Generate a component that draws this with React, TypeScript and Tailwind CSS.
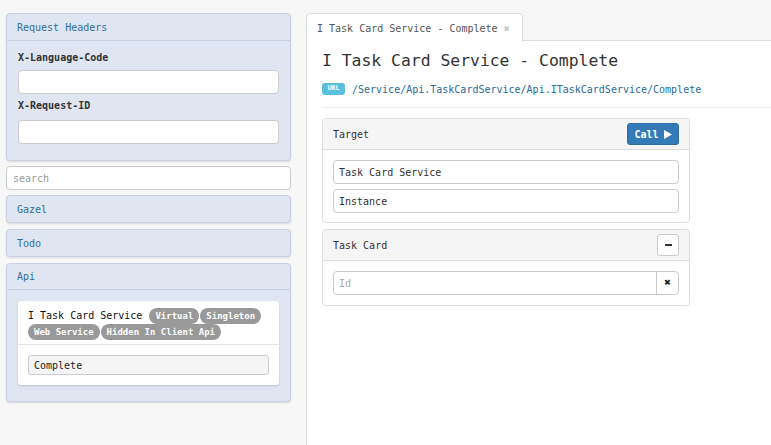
import React from "react";

const mono = { fontFamily: '"DejaVu Sans Mono", "Liberation Mono", monospace' };

function SidePanel({ title, children, headerH }: { title: string; children?: React.ReactNode; headerH: string }) {
  return (
    <div className="rounded-[4px] border border-[#c8d2e4] bg-[#dfe6f1] shadow-[0_1px_2px_rgba(0,0,0,0.12)]">
      <div className={`${headerH} flex items-center px-[10px] text-[10px] text-[#2f6f9a] ${children ? "border-b border-[#c8d2e4]" : ""}`}>
        {title}
      </div>
      {children}
    </div>
  );
}

function Badge({ children }: { children: React.ReactNode }) {
  return (
    <span className="inline-flex h-[16px] items-center rounded-[8px] bg-[#999] px-[6px] text-[9px] font-bold text-white leading-none">
      {children}
    </span>
  );
}

export default function App() {
  return (
    <div className="flex h-[445px] w-[771px] overflow-hidden bg-[#f7f7f7] text-[#333]" style={mono}>
      {/* Sidebar */}
      <div className="w-[306px] shrink-0 pl-[6px] pr-[15px] pt-[13px] flex flex-col">
        <SidePanel title="Request Headers" headerH="h-[27px]">
          <div className="px-[11px] pt-[9px] pb-[16px]">
            <div className="text-[10px] font-bold text-[#333] h-[16px] leading-[16px]">X-Language-Code</div>
            <div className="mt-[4px] h-[24px] rounded-[4px] border border-[#ccc] bg-white" />
            <div className="mt-[4px] text-[10px] font-bold text-[#333] h-[16px] leading-[16px]">X-Request-ID</div>
            <div className="mt-[6px] h-[24px] rounded-[4px] border border-[#ccc] bg-white" />
          </div>
        </SidePanel>
        <div className="mt-[5px] h-[24px] rounded-[4px] border border-[#ccc] bg-white flex items-center px-[6px] text-[10px] text-[#999]">
          search
        </div>
        <div className="mt-[5px]">
          <SidePanel title="Gazel" headerH="h-[26px]" />
        </div>
        <div className="mt-[6px]">
          <SidePanel title="Todo" headerH="h-[26px]" />
        </div>
        <div className="mt-[6px]">
          <SidePanel title="Api" headerH="h-[26px]">
            <div className="px-[11px] pt-[11px] pb-[16px]">
              <div className="rounded-[3px] bg-white shadow-[0_1px_2px_rgba(0,0,0,0.15)]">
                <div className="px-[10px] pt-[7px] pb-[4px] border-b border-[#e3e3e3] flex flex-wrap items-center gap-x-[1px] gap-y-[0px]">
                  <span className="text-[10px] text-[#111] mr-[6px] leading-[16px]">I Task Card Service</span>
                  <Badge>Virtual</Badge>
                  <Badge>Singleton</Badge>
                  <Badge>Web Service</Badge>
                  <Badge>Hidden In Client Api</Badge>
                </div>
                <div className="px-[10px] pt-[10px] pb-[10px]">
                  <div className="h-[20px] rounded-[3px] border border-[#ccc] bg-[#f5f5f5] flex items-center px-[5px] text-[10px] text-[#222]">
                    Complete
                  </div>
                </div>
              </div>
            </div>
          </SidePanel>
        </div>
      </div>

      {/* Main */}
      <div className="flex-1 flex flex-col pt-[13px]">
        <div className="flex h-[28px]">
          <div className="w-[217px] h-[29px] rounded-t-[4px] border border-b-0 border-[#ddd] bg-white flex items-center pl-[10px] text-[10px] text-[#555] relative z-10">
            <span>I Task Card Service - Complete</span>
            <span className="ml-[6px] text-[10px] text-[#c8c8c8]">✖</span>
          </div>
          <div className="flex-1 border-b border-[#ddd]" />
        </div>
        <div className="flex-1 bg-white border-l border-[#ddd] pl-[15px]">
          <div className="pt-[8px] text-[16.4px] text-[#333] leading-[24px]">I Task Card Service - Complete</div>
          <div className="mt-[9px] flex items-center h-[14px]">
            <span className="h-[12px] w-[23px] rounded-[3px] bg-[#5bc0de] text-white text-[6.5px] font-bold flex items-center justify-center">URL</span>
            <span className="ml-[7px] text-[10px] text-[#2a6a96]">/Service/Api.TaskCardService/Api.ITaskCardService/Complete</span>
          </div>
          <div className="mt-[11px] border-t border-[#eee]" />

          <div className="mt-[10px] w-[368px] flex flex-col gap-[6px]">
            <div className="rounded-[4px] border border-[#ddd] bg-white">
              <div className="h-[31px] bg-[#f5f5f5] border-b border-[#ddd] rounded-t-[4px] flex items-center justify-between pl-[10px] pr-[10px]">
                <span className="text-[10px] text-[#333]">Target</span>
                <span className="h-[22px] w-[52px] rounded-[3px] bg-[#337ab7] border border-[#2e6da4] text-white text-[10px] font-bold flex items-center justify-center gap-[5px]">
                  Call
                  <svg width="8" height="9" viewBox="0 0 8 9"><path d="M0 0 L8 4.5 L0 9 Z" fill="white" /></svg>
                </span>
              </div>
              <div className="px-[10px] pt-[10px] pb-[9px] flex flex-col gap-[5px]">
                <div className="h-[24px] rounded-[4px] border border-[#ccc] flex items-center px-[5px] text-[10px] text-[#333]">Task Card Service</div>
                <div className="h-[24px] rounded-[4px] border border-[#ccc] flex items-center px-[5px] text-[10px] text-[#333]">Instance</div>
              </div>
            </div>

            <div className="rounded-[4px] border border-[#ddd] bg-white">
              <div className="h-[31px] bg-[#f5f5f5] border-b border-[#ddd] rounded-t-[4px] flex items-center justify-between pl-[10px] pr-[10px]">
                <span className="text-[10px] text-[#333]">Task Card</span>
                <span className="h-[22px] w-[22px] rounded-[3px] bg-white border border-[#ccc] flex items-center justify-center">
                  <span className="block h-[2px] w-[7px] bg-[#333]" />
                </span>
              </div>
              <div className="px-[10px] py-[10px]">
                <div className="h-[24px] rounded-[4px] border border-[#ccc] flex">
                  <div className="flex-1 flex items-center px-[5px] text-[10px] text-[#aaa]">Id</div>
                  <div className="w-[22px] border-l border-[#ccc] flex items-center justify-center text-[11px] text-[#222] font-bold">✖</div>
                </div>
              </div>
            </div>
          </div>
        </div>
      </div>
    </div>
  );
}
